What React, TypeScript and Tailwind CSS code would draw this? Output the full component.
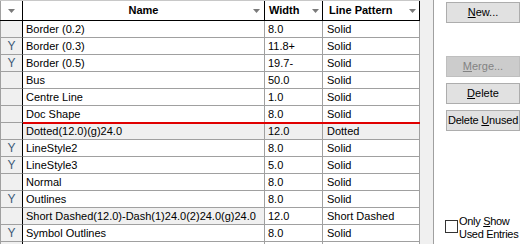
import React from "react";

type Row = { used: boolean; name: string; width: string; pattern: string; shaded?: "row" | "name" };

const rows: Row[] = [
  { used: false, name: "Border (0.2)", width: "8.0", pattern: "Solid" },
  { used: true, name: "Border (0.3)", width: "11.8+", pattern: "Solid" },
  { used: true, name: "Border (0.5)", width: "19.7-", pattern: "Solid" },
  { used: false, name: "Bus", width: "50.0", pattern: "Solid" },
  { used: false, name: "Centre Line", width: "1.0", pattern: "Solid" },
  { used: false, name: "Doc Shape", width: "8.0", pattern: "Solid" },
  { used: false, name: "Dotted(12.0)(g)24.0", width: "12.0", pattern: "Dotted", shaded: "row" },
  { used: true, name: "LineStyle2", width: "8.0", pattern: "Solid" },
  { used: true, name: "LineStyle3", width: "5.0", pattern: "Solid" },
  { used: false, name: "Normal", width: "8.0", pattern: "Solid" },
  { used: true, name: "Outlines", width: "8.0", pattern: "Solid" },
  { used: false, name: "Short Dashed(12.0)-Dash(1)24.0(2)24.0(g)24.0", width: "12.0", pattern: "Short Dashed", shaded: "name" },
  { used: true, name: "Symbol Outlines", width: "8.0", pattern: "Solid" },
  { used: false, name: "", width: "", pattern: "" },
];

function Arrow() {
  return (
    <svg width="7" height="4" viewBox="0 0 7 4" className="shrink-0">
      <path d="M0 0H7L3.5 4Z" fill="#7a7a7a" />
    </svg>
  );
}

function Btn({ children, disabled }: { children: React.ReactNode; disabled?: boolean }) {
  return (
    <div
      className={
        "flex h-[21px] w-[74px] items-center justify-center whitespace-nowrap border text-[11px] " +
        (disabled ? "border-[#bfbfbf] bg-[#cccccc] text-[#838383]" : "border-[#adadad] bg-[#e1e1e1] text-black")
      }
    >
      {children}
    </div>
  );
}

export default function App() {
  return (
    <div className="flex h-[244px] w-[524px] overflow-hidden bg-white font-['Liberation_Sans',Arial,sans-serif] text-[11px] text-black">
      <div className="w-[420px] shrink-0">
        <div className="flex h-[21px] border-t border-b border-t-[#c8c8c8] border-b-black bg-white">
          <div className="flex w-[23px] items-center justify-center border-l border-r border-l-[#a0a0a0] border-r-black">
            <Arrow />
          </div>
          <div className="relative flex w-[242px] items-center justify-center border-r border-black font-bold">
            Name
            <div className="absolute right-[4px] top-[8px]">
              <Arrow />
            </div>
          </div>
          <div className="flex w-[58px] items-center justify-between border-r border-black pl-[4px] pr-[3px] font-bold">
            Width
            <Arrow />
          </div>
          <div className="flex w-[97px] items-center justify-between border-r border-black pl-[6px] pr-[3px] font-bold">
            Line Pattern
            <Arrow />
          </div>
        </div>
        {rows.map((r, i) => {
          const rowBg = r.shaded === "row" ? "bg-[#f0f0f0]" : "bg-white";
          const nameBg = r.shaded ? "bg-[#f0f0f0]" : "bg-white";
          return (
            <div key={i} className="relative flex h-[17px]">
              <div className="flex w-[23px] items-center justify-center border-b border-l border-r border-l-[#a0a0a0] border-b-[#a0a0a0] border-r-black bg-[#f0f0f0] text-[12px] text-[#3d5a78]">
                {r.used ? "Y" : ""}
              </div>
              <div className={"flex w-[242px] items-center overflow-hidden whitespace-nowrap border-b border-r border-[#a0a0a0] pl-[3px] " + nameBg}>
                {r.name}
              </div>
              <div className={"flex w-[58px] items-center border-b border-r border-[#a0a0a0] pl-[3px] " + rowBg}>
                {r.width}
              </div>
              <div className={"flex w-[97px] items-center border-b border-r border-[#a0a0a0] pl-[4px] " + rowBg}>
                {r.pattern}
              </div>
              {r.shaded === "row" && (
                <div className="absolute left-[23px] right-0 top-[-1px] h-[2px] bg-[#e00000]" />
              )}
            </div>
          );
        })}
      </div>
      <div className="w-[14px] shrink-0 border-r border-[#a0a0a0] bg-[#f0f0f0]" />
      <div className="ml-[12px] flex flex-col pt-[2px]">
        <Btn>
          <span><u>N</u>ew...</span>
        </Btn>
        <div className="h-[33px]" />
        <Btn disabled>
          <span><u>M</u>erge...</span>
        </Btn>
        <div className="h-[6px]" />
        <Btn>
          <span><u>D</u>elete</span>
        </Btn>
        <div className="h-[6px]" />
        <Btn>
          <span className="tracking-[-0.2px]">Delete <u>U</u>nused</span>
        </Btn>
        <div className="-ml-[1px] mt-[84px] flex items-start gap-[1px]">
          <div className="mt-[5px] h-[13px] w-[13px] shrink-0 border border-[#333333] bg-white" />
          <div className="whitespace-nowrap text-[11px] leading-[13px] tracking-[-0.3px]">
            Only <u>S</u>how
            <br />
            Used Entries
          </div>
        </div>
      </div>
    </div>
  );
}
